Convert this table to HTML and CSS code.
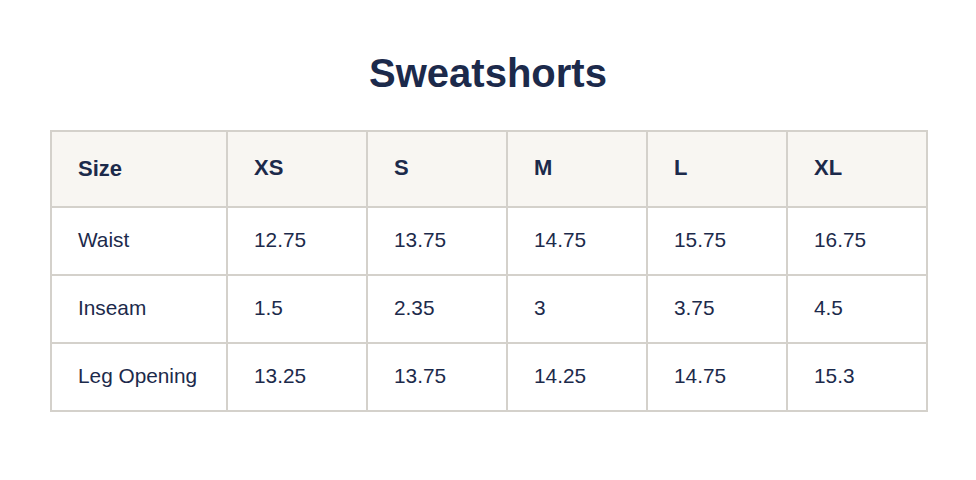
FILE: index.html
```html
<!DOCTYPE html>
<html lang="en">
<head>
<meta charset="utf-8">
<title>Sweatshorts Size Chart</title>
<link rel="stylesheet" href="styles.css">
</head>
<body>
<main class="page">
  <h1 class="title">Sweatshorts</h1>
  <table class="chart">
    <colgroup>
      <col class="col-label">
      <col><col><col><col><col>
    </colgroup>
    <thead>
      <tr>
        <th class="label">Size</th>
        <th>XS</th>
        <th>S</th>
        <th>M</th>
        <th>L</th>
        <th>XL</th>
      </tr>
    </thead>
    <tbody>
      <tr>
        <td class="label">Waist</td>
        <td>12.75</td><td>13.75</td><td>14.75</td><td>15.75</td><td>16.75</td>
      </tr>
      <tr>
        <td class="label">Inseam</td>
        <td>1.5</td><td>2.35</td><td>3</td><td>3.75</td><td>4.5</td>
      </tr>
      <tr>
        <td class="label">Leg Opening</td>
        <td>13.25</td><td>13.75</td><td>14.25</td><td>14.75</td><td>15.3</td>
      </tr>
    </tbody>
  </table>
</main>
</body>
</html>
```

FILE: styles.css
```css
* { box-sizing: border-box; }

html, body {
  margin: 0;
  background: #ffffff;
}

body {
  font-family: "Liberation Sans", Arial, sans-serif;
  color: #1c2a4b;
}

.page {
  display: flex;
  flex-direction: column;
  align-items: center;
  padding: 50px 48px 40px;
}

.title {
  margin: 0 0 34px;
  font-size: 40px;
  font-weight: 700;
  line-height: 46px;
  color: #1c2a4b;
}

.chart {
  width: 878px;
  margin-left: 2px;
  border-collapse: collapse;
  table-layout: fixed;
}

.col-label { width: 176px; }

.chart th,
.chart td {
  border: 2px solid #d4d1cb;
  text-align: left;
  vertical-align: middle;
  padding: 0 24px 2px 26px;
}

.chart th {
  background: #f8f6f2;
  font-size: 22px;
  font-weight: 700;
  line-height: 25px;
  height: 76px;
  padding-bottom: 4px;
}

.chart th.label {
  padding-bottom: 2px;
}

.chart td {
  font-size: 20.8px;
  font-weight: 400;
  line-height: 24px;
  height: 68px;
}
```
